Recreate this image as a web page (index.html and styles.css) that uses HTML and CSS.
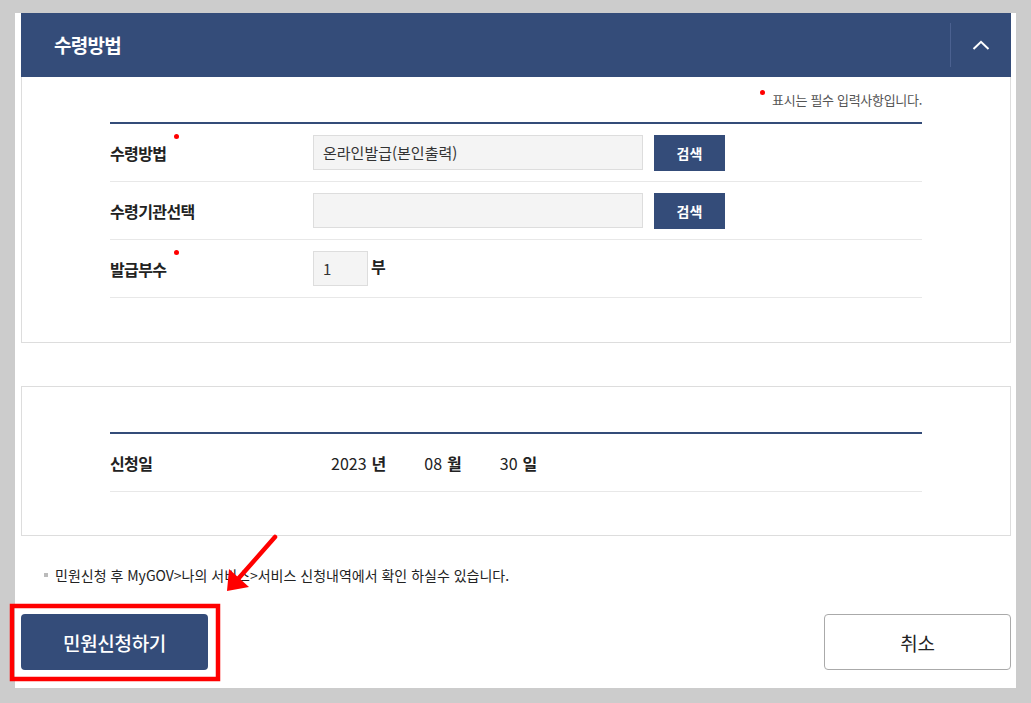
FILE: index.html
```html
<!DOCTYPE html>
<html lang="ko">
<head>
    <meta charset="UTF-8">
    <meta name="viewport" content="width=device-width, initial-scale=1.0">
    <title>수령방법</title>
    <link rel="stylesheet" href="styles.css">
</head>
<body>
    <div class="page">
        <div class="section-head">
            <h2>수령방법</h2>
            <button class="toggle" aria-label="접기">
                <svg width="18" height="10" viewBox="0 0 18 10"><path d="M1.5 9 L9 1.8 L16.5 9" fill="none" stroke="#fff" stroke-width="2"/></svg>
            </button>
        </div>
        <div class="section-body">
            <p class="notice"><span class="dot"></span>표시는 필수 입력사항입니다.</p>
            <div class="form-table">
                <div class="row">
                    <div class="label"><span class="req">수령방법</span></div>
                    <div class="value">
                        <input type="text" class="field" value="온라인발급(본인출력)" readonly>
                        <button class="btn-search">검색</button>
                    </div>
                </div>
                <div class="row">
                    <div class="label"><span>수령기관선택</span></div>
                    <div class="value">
                        <input type="text" class="field" value="" readonly>
                        <button class="btn-search">검색</button>
                    </div>
                </div>
                <div class="row">
                    <div class="label"><span class="req">발급부수</span></div>
                    <div class="value">
                        <input type="text" class="field small" value="1">
                        <span class="unit">부</span>
                    </div>
                </div>
            </div>
        </div>

        <div class="panel">
            <div class="form-table">
                <div class="row">
                    <div class="label"><span>신청일</span></div>
                    <div class="value date">
                        <span class="num">2023</span><b>년</b>
                        <span class="num gap">08</span><b>월</b>
                        <span class="num gap">30</span><b>일</b>
                    </div>
                </div>
            </div>
        </div>

        <p class="info">민원신청 후 MyGOV&gt;나의 서비스&gt;서비스 신청내역에서 확인 하실수 있습니다.</p>

        <div class="actions">
            <button class="btn-submit">민원신청하기</button>
            <button class="btn-cancel">취소</button>
        </div>
    </div>

    <svg class="mark" width="1031" height="703" viewBox="0 0 1031 703">
        <rect x="12" y="606" width="206" height="73" fill="none" stroke="#f00" stroke-width="4.5"/>
        <line x1="275" y1="537" x2="238" y2="579" stroke="#f00" stroke-width="4.5" stroke-linecap="round"/>
        <polygon points="227,591 229,569 249,587" fill="#f00"/>
    </svg>
</body>
</html>
```

FILE: styles.css
```css
body {
    margin: 0;
    background-color: #cccccc;
    font-family: "Noto Sans CJK KR", "Noto Sans", sans-serif;
    color: #222;
    position: relative;
    height: 703px;
    overflow: hidden;
}
.page {
    width: 990px;
    margin: 13px 0 0 15px;
    padding: 0 5px 18px 6px;
    background-color: #fff;
}
.section-head {
    height: 64px;
    background-color: #344c79;
    display: flex;
    align-items: center;
    justify-content: space-between;
    padding-left: 33px;
}
.section-head h2 {
    margin: 0;
    color: #fff;
    font-size: 19px;
    font-weight: 700;
    letter-spacing: -0.7px;
    line-height: 24px;
}
.toggle {
    width: 61px;
    height: 44px;
    border: none;
    border-left: 1px solid #4b6190;
    background: none;
    display: flex;
    align-items: center;
    justify-content: center;
    padding: 0;
}
.section-body {
    border: 1px solid #dddddd;
    border-top: none;
    padding: 13px 88px 44px 88px;
}
.notice {
    margin: 0 0 12px;
    display: flex;
    justify-content: flex-end;
    align-items: flex-start;
    font-size: 13px;
    letter-spacing: -0.3px;
    line-height: 20px;
    color: #555;
}
.notice .dot {
    width: 5px;
    height: 5px;
    border-radius: 50%;
    background-color: #f00;
    margin: 0 7px 0 0;
}
.form-table {
    border-top: 2px solid #344c79;
}
.row {
    display: flex;
    align-items: center;
    height: 57px;
    border-bottom: 1px solid #e8e8e8;
}
.label {
    width: 203px;
    font-size: 16px;
    font-weight: 700;
    letter-spacing: -0.6px;
    line-height: 20px;
    color: #222;
}
.label span {
    position: relative;
}
.req::after {
    content: '';
    position: absolute;
    right: -13px;
    top: -7px;
    width: 5px;
    height: 5px;
    border-radius: 50%;
    background-color: #f00;
}
.value {
    display: flex;
    align-items: center;
}
.field {
    box-sizing: border-box;
    width: 330px;
    height: 35px;
    border: 1px solid #dddddd;
    background-color: #f4f4f4;
    padding: 0 9px;
    font-family: inherit;
    font-size: 15px;
    color: #333;
    outline: none;
}
.field.small {
    width: 55px;
}
.btn-search {
    width: 71px;
    height: 36px;
    margin-left: 11px;
    border: none;
    background-color: #344c79;
    color: #fff;
    font-family: inherit;
    font-size: 14px;
    font-weight: 700;
}
.unit {
    margin-left: 3px;
    font-size: 16px;
    font-weight: 700;
    align-self: flex-start;
    line-height: 30px;
}
.panel {
    margin-top: 43px;
    border: 1px solid #dddddd;
    padding: 45px 88px 43px 88px;
}
.date {
    padding-left: 18px;
    font-size: 16px;
    line-height: 20px;
}
.date .num {
    margin-right: 5px;
}
.date .gap {
    margin-left: 38px;
}
.date b {
    font-weight: 700;
}
.info {
    margin: 28px 0 0;
    padding-left: 23px;
    font-size: 14px;
    line-height: 22px;
    color: #222;
    display: flex;
    align-items: center;
}
.info::before {
    content: '';
    width: 4px;
    height: 4px;
    background-color: #bbb;
    margin-right: 7px;
}
.actions {
    margin-top: 28px;
    display: flex;
    justify-content: space-between;
}
.btn-submit, .btn-cancel {
    width: 187px;
    height: 56px;
    border-radius: 4px;
    font-family: inherit;
    font-size: 19px;
    letter-spacing: -0.3px;
}
.btn-submit {
    border: none;
    background-color: #344c79;
    color: #fff;
    font-weight: 500;
}
.btn-cancel {
    border: 1px solid #aaaaaa;
    background-color: #fff;
    color: #222;
}
.mark {
    position: absolute;
    left: 0;
    top: 0;
    pointer-events: none;
}
```
